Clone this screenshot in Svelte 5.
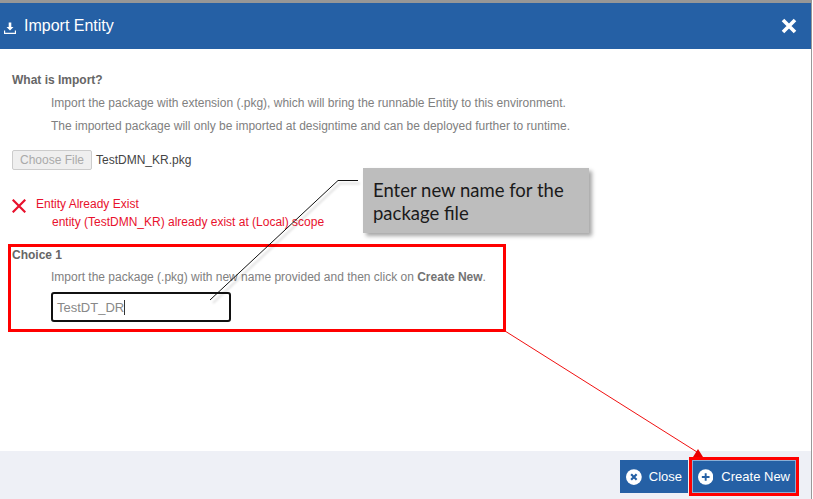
<script>
  const intro = [
    'Import the package with extension (.pkg), which will bring the runnable Entity to this environment.',
    'The imported package will only be imported at designtime and can be deployed further to runtime.'
  ];
</script>

<div class="page">
  <div class="dialog">
    <header class="head">
      <div class="title">
        <svg class="dl" viewBox="0 0 12 12" width="12" height="12" aria-hidden="true">
          <path d="M4.7 0.500h2.600v4.500h2.200L6 8.500 2.500 5h2.200z" fill="#fff" />
          <path d="M.5 8.500v2.800h11V8.500" fill="none" stroke="#fff" stroke-width="1.300" />
        </svg>
        <span>Import Entity</span>
      </div>
      <svg class="x" viewBox="0 0 16 16" width="16" height="16" aria-hidden="true">
        <path d="M2 2l12 12M14 2L2 14" stroke="#fff" stroke-width="3.600" />
      </svg>
    </header>

    <main class="body">
      <h4>What is Import?</h4>
      {#each intro as line}
        <p class="line">{line}</p>
      {/each}

      <div class="file">
        <span class="choose">Choose File</span>
        <span class="fname">TestDMN_KR.pkg</span>
      </div>

      <div class="err">
        <svg class="errx" viewBox="0 0 14 14" width="14" height="14" aria-hidden="true">
          <path d="M.7.700l12.600 12.600M13.300.700L.7 13.300" stroke="#e8112d" stroke-width="2.200" />
        </svg>
        <div class="msgs">
          <div class="e1">Entity Already Exist</div>
          <div class="e2">entity (TestDMN_KR) already exist at (Local) scope</div>
        </div>
      </div>

      <section class="choice">
        <h4>Choice 1</h4>
        <p class="line">Import the package (.pkg) with new name provided and then click on <b>Create New</b>.</p>
        <div class="input">TestDT_DR<i class="caret"></i></div>
      </section>
    </main>

    <footer class="foot">
      <button class="btn close">
        <svg viewBox="0 0 16 16" width="16" height="16" aria-hidden="true">
          <circle cx="8" cy="8" r="8" fill="#fff" />
          <path d="M5.200 5.200l5.600 5.600M10.800 5.200l-5.600 5.600" stroke="#2560a5" stroke-width="2.200" />
        </svg>
        Close
      </button>
      <div class="hl">
        <button class="btn create">
          <svg viewBox="0 0 16 16" width="16" height="16" aria-hidden="true">
            <circle cx="8" cy="8" r="8" fill="#fff" />
            <path d="M8 4v8M4 8h8" stroke="#2560a5" stroke-width="2" />
          </svg>
          Create New
        </button>
      </div>
    </footer>
  </div>

  <svg class="lines" viewBox="0 0 813 499" width="813" height="499" aria-hidden="true">
    <path class="shade" d="M360 183.500H340L213 303" fill="none" stroke="#000" stroke-width="2" />
    <path d="M358 180.500H338L210 300" fill="none" stroke="#111" stroke-width="1" />
    <path d="M505 331L697 452" fill="none" stroke="#f01010" stroke-width="1" />
    <path d="M698 449l5 8h-10z" fill="#e80000" />
  </svg>

  <div class="callout">Enter new name for the package file</div>
</div>

<style>
  :global(body) {
    margin: 0;
    background: #fff;
  }
  .page {
    position: relative;
    width: 813px;
    height: 499px;
    overflow: hidden;
    background: #fff;
    font-family: "Liberation Sans", Arial, sans-serif;
    font-size: 12px;
    color: #808080;
  }
  .dialog {
    display: flex;
    flex-direction: column;
    box-sizing: border-box;
    width: 812px;
    height: 499px;
    border-top: 3px solid #979797;
    border-right: 1px solid #999;
  }
  .head {
    flex: none;
    height: 46px;
    display: flex;
    align-items: center;
    justify-content: space-between;
    padding: 0 14px 0 4px;
    background: #2560a5;
    color: #fff;
  }
  .title {
    display: flex;
    align-items: center;
    gap: 8px;
    font-size: 16px;
  }
  .dl {
    margin-top: 4px;
  }
  .x {
    margin-top: -1px;
  }
  .body {
    flex: 1;
    padding: 24px 12px 0 12px;
  }
  h4 {
    margin: 0;
    font-size: 12px;
    line-height: 14px;
    font-weight: 700;
    color: #666;
  }
  .line {
    margin: 9px 0 0 39px;
    line-height: 14px;
  }
  .file {
    display: flex;
    align-items: center;
    gap: 4px;
    margin-top: 17px;
  }
  .choose {
    box-sizing: border-box;
    width: 80px;
    height: 20px;
    line-height: 18px;
    text-align: center;
    border: 1px solid #ccc;
    border-radius: 2px;
    background: #efefef;
    color: #aaa;
  }
  .fname {
    color: #444;
  }
  .err {
    display: flex;
    gap: 10px;
    margin-top: 25px;
    color: #e8112d;
    line-height: 18px;
  }
  .errx {
    margin-top: 4px;
    flex: none;
  }
  .e2 {
    margin-left: 16px;
  }
  .choice {
    box-sizing: border-box;
    width: 498px;
    height: 88px;
    margin: 13px 0 0 -4px;
    padding: 1px 0 0 1px;
    border: 3px solid #ff0000;
  }
  .choice .line {
    margin-top: 8px;
  }
  .choice b {
    color: #737373;
  }
  .input {
    box-sizing: border-box;
    display: flex;
    align-items: center;
    width: 180px;
    height: 30px;
    margin: 8px 0 0 39px;
    padding-left: 4px;
    border: 2px solid #111;
    border-radius: 3px;
    font-size: 13px;
    color: #888;
  }
  .caret {
    width: 1px;
    height: 15px;
    background: #333;
  }
  .foot {
    flex: none;
    height: 48px;
    display: flex;
    justify-content: flex-end;
    align-items: flex-start;
    gap: 1px;
    padding-right: 12px;
    background: #eef0f6;
  }
  .btn {
    display: flex;
    align-items: center;
    gap: 7px;
    height: 33px;
    margin: 0;
    padding: 0 6px;
    border: 0;
    background: #2560a5;
    color: #fff;
    font: 13px "Liberation Sans", Arial, sans-serif;
    white-space: nowrap;
  }
  .close {
    width: 68px;
    margin-top: 9px;
  }
  .create {
    width: 104px;
    gap: 8px;
    box-shadow: inset 0 0 0 1px #8aaed6;
  }
  .hl {
    box-sizing: border-box;
    margin-top: 6px;
    width: 110px;
    height: 39px;
    border: 3px solid #ff0000;
  }
  .lines {
    position: absolute;
    left: 0;
    top: 0;
    pointer-events: none;
  }
  .shade {
    opacity: 0.12;
    filter: blur(1px);
  }
  .callout {
    position: absolute;
    left: 363px;
    top: 168px;
    box-sizing: border-box;
    width: 226px;
    height: 65px;
    padding: 11px 10px;
    background: #bdbdbd;
    box-shadow: 3px 3px 4px rgba(0, 0, 0, 0.35);
    font-family: Lato, sans-serif;
    font-size: 18.5px;
    line-height: 23px;
    color: #1a1a1a;
  }
</style>
